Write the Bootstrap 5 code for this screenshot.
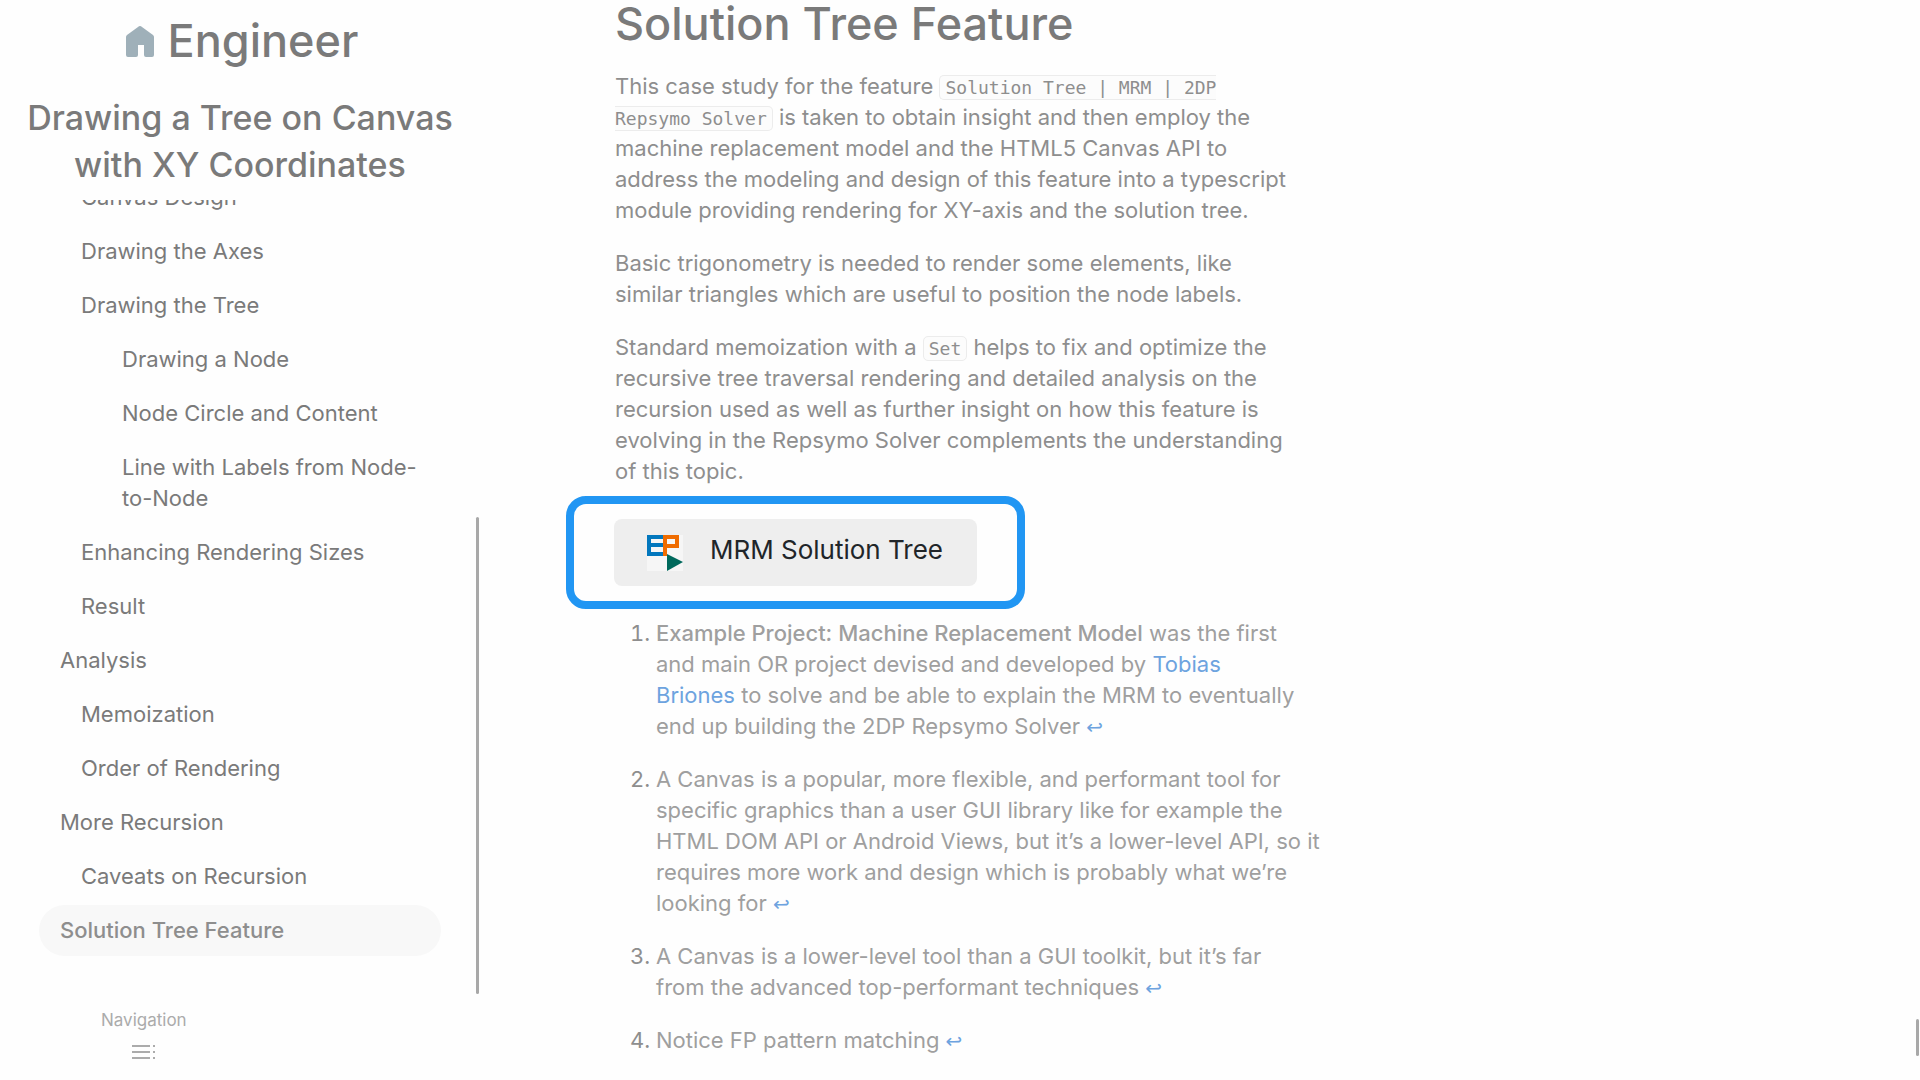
<!DOCTYPE html>
<html lang="en">
<head>
<meta charset="utf-8">
<meta name="viewport" content="width=device-width, initial-scale=1">
<title>Drawing a Tree on Canvas with XY Coordinates</title>
<link href="https://cdn.jsdelivr.net/npm/bootstrap@5.3.0/dist/css/bootstrap.min.css" rel="stylesheet">
<style>
body { font-family: Inter, "Open Sans", sans-serif; font-size: 22px; line-height: 31px; color: #8e8e8e; background: #fefefe; }
.side-title, .brand-link, .article-title { color: #7a7a7a; font-weight: 500; }
.brand-link { font-size: 45px; line-height: 66px; gap: 10px; }
.side-title { font-size: 34px; line-height: 47px; padding-bottom: 12px; margin: 20px 0 0; }
.toc { min-height: 0; }
.toc-list { gap: 3px; padding: 0 35px 38px 39px; }
.toc-list .nav-link { color: #7a7a7a; padding: 10px 21px; border-radius: 26px; white-space: nowrap; }
.toc-list .lvl-2 { padding-left: 42px; }
.toc-list .lvl-3 { padding-left: 83px; }
.toc-list .nav-link.active { background: #f8f8f8; color: #8e8e8e; font-weight: 500; }
.thumb { width: 3px; background: #a8a8a8; border-radius: 2px; margin-right: 1px; }
.toc-thumb { height: 60%; }
.side-foot { height: 89px; padding: 14px 0 0 101px; font-size: 17px; line-height: 24px; color: #ababab; }
.side-foot button { color: #ababab; }
.article { padding-left: 135px; }
.article-title { font-size: 45px; line-height: 64px; margin: -8px 0 15px; }
.article p { margin-bottom: 22px; white-space: nowrap; }
.article code { font: 18px/24px "DejaVu Sans Mono", monospace; color: #8e8e8e; background: #fcfcfc; border: 1px solid #ececec; border-radius: 5px; padding: 1px 5px; }
.callout { border: 8px solid #2196f3; border-radius: 20px; padding: 15px 40px; margin: -13px 0 9px -49px; }
.app-link { width: 363px; height: 67px; background: #eee; border-radius: 8px; padding: 0 33px; gap: 27px; font-size: 26px; color: #212529; text-decoration: none; white-space: nowrap; }
.app-link span { padding-bottom: 6px; }
.notes { padding-left: 41px; color: #9f9f9f; }
.notes li::marker { color: #8e8e8e; }
.notes a { color: #6da3df; text-decoration: none; }
.notes .back-ref { font-family: "DejaVu Sans", sans-serif; font-size: 20px; line-height: 1; }
.notes strong { font-weight: 500; }
.page-thumb { height: 37px; bottom: 24px; }
</style>
<script src="https://cdn.jsdelivr.net/npm/bootstrap@5.3.0/dist/js/bootstrap.bundle.min.js"></script>
</head>
<body>
<div class="container-fluid vh-100 overflow-hidden position-relative">
  <div class="row h-100">
    <aside class="col-3 px-0 h-100 d-flex flex-column">
      <a class="brand-link d-flex align-items-center justify-content-center text-decoration-none mt-2" href="#">
        <svg width="36" height="36" viewBox="0 0 36 36" aria-hidden="true"><path d="M5 12 16 4q2-2 4 0L31 12q1 1 1 2V32q0 2-2 2H24q-2 0-2-2V22H16V32q0 2-2 2H6q-2 0-2-2V14q0-1 1-2Z" fill="#9fb0b9"/></svg>
        <span>Engineer</span>
      </a>
      <h1 class="side-title text-center">Drawing a Tree on Canvas<br>with XY Coordinates</h1>
      <div class="toc d-flex flex-grow-1">
        <nav class="toc-list nav flex-column flex-nowrap flex-grow-1 justify-content-end overflow-hidden" aria-label="Contents">
          <a class="nav-link lvl-2" href="#">Canvas Design</a>
          <a class="nav-link lvl-2" href="#">Drawing the Axes</a>
          <a class="nav-link lvl-2" href="#">Drawing the Tree</a>
          <a class="nav-link lvl-3" href="#">Drawing a Node</a>
          <a class="nav-link lvl-3" href="#">Node Circle and Content</a>
          <a class="nav-link lvl-3" href="#">Line with Labels from Node-<br>to-Node</a>
          <a class="nav-link lvl-2" href="#">Enhancing Rendering Sizes</a>
          <a class="nav-link lvl-2" href="#">Result</a>
          <a class="nav-link" href="#">Analysis</a>
          <a class="nav-link lvl-2" href="#">Memoization</a>
          <a class="nav-link lvl-2" href="#">Order of Rendering</a>
          <a class="nav-link" href="#">More Recursion</a>
          <a class="nav-link lvl-2" href="#">Caveats on Recursion</a>
          <a class="nav-link active" aria-current="true" href="#">Solution Tree Feature</a>
        </nav>
        <div class="thumb toc-thumb align-self-end"></div>
      </div>
      <div class="side-foot d-flex flex-column align-items-start">
        <div class="d-flex flex-column align-items-center">
          <span>Navigation</span>
          <button class="btn p-0 mt-1 border-0 d-flex" type="button" aria-label="Navigation">
            <svg width="26" height="32" viewBox="0 0 26 32" fill="none" stroke="currentColor" stroke-width="2"><path d="M1 10H19M1 16H19M1 22H19M22 10h2M22 16h2M22 22h2"/></svg>
          </button>
        </div>
      </div>
    </aside>
    <main class="col-9 px-0">
      <article class="article">
        <h2 class="article-title">Solution Tree Feature</h2>
        <p>This case study for the feature <code>Solution Tree | MRM | 2DP<br>Repsymo Solver</code> is taken to obtain insight and then employ the<br>machine replacement model and the HTML5 Canvas API to<br>address the modeling and design of this feature into a typescript<br>module providing rendering for XY-axis and the solution tree.</p>
        <p>Basic trigonometry is needed to render some elements, like<br>similar triangles which are useful to position the node labels.</p>
        <p>Standard memoization with a <code>Set</code> helps to fix and optimize the<br>recursive tree traversal rendering and detailed analysis on the<br>recursion used as well as further insight on how this feature is<br>evolving in the Repsymo Solver complements the understanding<br>of this topic.</p>
        <div class="callout d-inline-block">
          <a class="app-link d-flex align-items-center" href="#">
            <svg width="36" height="36" viewBox="0 0 36 36" aria-hidden="true"><path fill="#f6f6f6" d="M0 0h36v36H0z"/><path fill="#0277bd" d="M0 0h16v4H4v4h12v4H4v5h12v4H0z"/><path fill="#ef6c00" fill-rule="evenodd" d="M16 0h16v13H20v8h-4zM20 4v5h8V4z"/><path fill="#00695c" d="M20 19 36 27 20 36z"/></svg>
            <span>MRM Solution Tree</span>
          </a>
        </div>
        <ol class="notes mb-0">
          <li><p><strong>Example Project: Machine Replacement Model</strong> was the first<br>and main OR project devised and developed by <a href="#">Tobias<br>Briones</a> to solve and be able to explain the MRM to eventually<br>end up building the 2DP Repsymo Solver <a class="back-ref" href="#">↩</a></p></li>
          <li><p>A Canvas is a popular, more flexible, and performant tool for<br>specific graphics than a user GUI library like for example the<br>HTML DOM API or Android Views, but it’s a lower-level API, so it<br>requires more work and design which is probably what we’re<br>looking for <a class="back-ref" href="#">↩</a></p></li>
          <li><p>A Canvas is a lower-level tool than a GUI toolkit, but it’s far<br>from the advanced top-performant techniques <a class="back-ref" href="#">↩</a></p></li>
          <li><p>Notice FP pattern matching <a class="back-ref" href="#">↩</a></p></li>
        </ol>
      </article>
    </main>
  </div>
  <div class="thumb page-thumb position-absolute end-0"></div>
</div>
</body>
</html>
